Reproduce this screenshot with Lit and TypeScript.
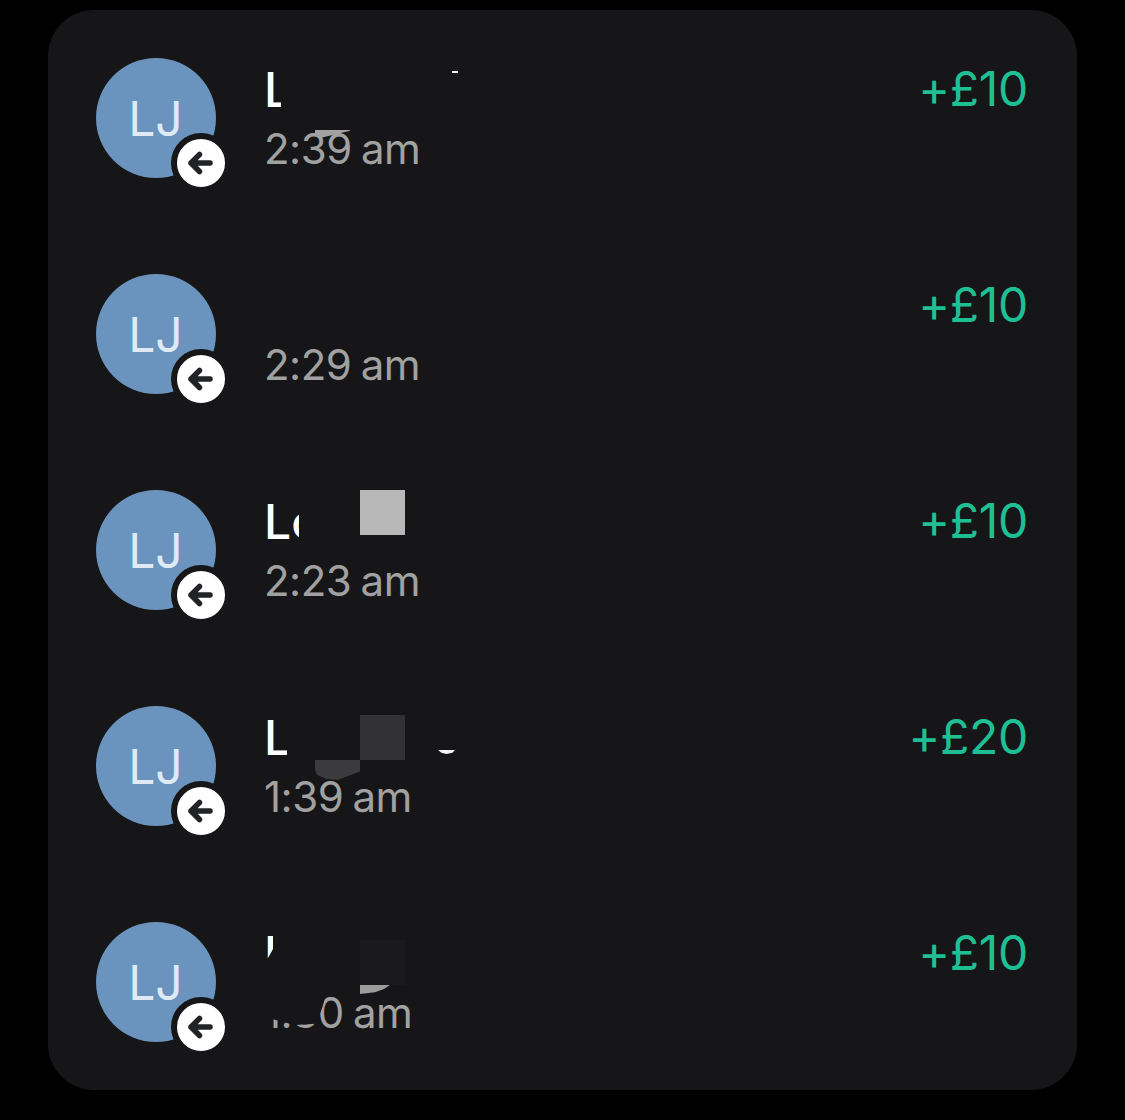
import { LitElement, html, css } from "lit";
import { customElement } from "lit/decorators.js";

const CARD = "#161618";

interface Patch { x: number; y: number; w: number; h: number; c: string; clip?: string }
interface Tx { name: string; time: string; amount: string; patches: Patch[] }

const rows: Tx[] = [
  {
    name: "L", time: "2:39 am", amount: "+£10",
    patches: [
      { x: 15, y: 10, w: 30, h: 44, c: CARD },
      { x: 186, y: 13, w: 6, h: 2, c: "#f2f2f2" },
      { x: 49, y: 72, w: 35, h: 8, c: "#a2a2a2", clip: "polygon(0 0,100% 0,100% 8%,15% 100%,0 75%)" },
    ],
  },
  { name: "", time: "2:29 am", amount: "+£10", patches: [] },
  {
    name: "Lo", time: "2:23 am", amount: "+£10",
    patches: [
      { x: 33, y: 8, w: 30, h: 44, c: CARD },
      { x: 94, y: 0, w: 45, h: 45, c: "#b8b8b8" },
    ],
  },
  {
    name: "L", time: "1:39 am", amount: "+£20",
    patches: [
      { x: 21, y: 8, w: 10, h: 44, c: CARD },
      { x: 94, y: 9, w: 45, h: 45, c: "#323234" },
      { x: 49, y: 54, w: 45, h: 20, c: "#3b3b3d", clip: "polygon(0 0,100% 0,100% 58%,50% 100%,25% 95%,5% 75%,0 50%)" },
      { x: 172, y: 44, w: 17, h: 4, c: "#f4f4f4", clip: "polygon(0 0,100% 0,85% 70%,50% 100%,20% 70%)" },
    ],
  },
  {
    name: "L", time: "1:30 am", amount: "+£10",
    patches: [
      { x: -4, y: 8, w: 40, h: 50, c: CARD, clip: "polygon(27.5% 0,100% 0,100% 100%,0 100%,0 56%,15% 56%,27.5% 38%)" },
      { x: 94, y: 18, w: 45, h: 45, c: "#1a1a1c" },
      { x: 94, y: 63, w: 30, h: 9, c: "#9c9c9c", clip: "polygon(0 0,100% 0,80% 45%,50% 80%,0 100%)" },
      { x: -4, y: 66, w: 66, h: 42, c: CARD, clip: "polygon(0 0,100% 0,91% 48%,82% 85%,50% 88%,18% 75%,12% 75%,11% 100%,0 100%)" },
    ],
  },
];

@customElement("app-root")
export class AppRoot extends LitElement {
  static styles = css`
    :host {
      display: block;
      width: 1125px;
      height: 1120px;
      background: #000;
      font-family: Inter, "Liberation Sans", sans-serif;
      overflow: hidden;
    }
    .page {
      padding: 10px 48px 30px;
    }
    .card {
      background: #161618;
      border-radius: 46px;
      height: 1080px;
      box-sizing: border-box;
      padding: 48px 49px 48px 48px;
      display: flex;
      flex-direction: column;
      gap: 96px;
    }
    .row {
      display: flex;
      gap: 50px;
      height: 120px;
    }
    .avatar {
      position: relative;
      flex: none;
      width: 120px;
      height: 120px;
      border-radius: 50%;
      background: #6a94bd;
      color: #dfeaf6;
      font-size: 48px;
      display: flex;
      align-items: center;
      justify-content: center;
      box-sizing: border-box;
      padding-right: 1px;
    }
    .badge {
      position: absolute;
      left: 75px;
      top: 75px;
      width: 48px;
      height: 48px;
      border-radius: 50%;
      background: #fff;
      border: 6px solid #161618;
      display: flex;
    }
    .text {
      position: relative;
      flex: 1;
      padding-top: 2px;
    }
    .name {
      color: #fff;
      font-size: 48px;
      font-weight: 500;
      line-height: 60px;
      height: 59px;
      margin-left: -2px;
    }
    .time {
      color: #a1a1a2;
      font-size: 42px;
      line-height: 60px;
      letter-spacing: -0.5px;
      word-spacing: -2px;
      margin-left: -2px;
    }
    .amount {
      color: #1fbf94;
      font-size: 48px;
      line-height: 60px;
      letter-spacing: -0.3px;
      padding-top: 1px;
    }
    .patch {
      position: absolute;
    }
  `;

  render() {
    return html`
      <div class="page">
        <div class="card">
          ${rows.map(
            (r) => html`
              <div class="row">
                <div class="avatar">
                  LJ
                  <div class="badge">
                    <svg width="48" height="48" viewBox="0 0 48 48" fill="none" stroke="#222326" stroke-width="5.5" stroke-linecap="round" stroke-linejoin="round">
                      <path d="M14 24H33M22.5 15.5L14 24L22.5 32.5" />
                    </svg>
                  </div>
                </div>
                <div class="text">
                  <div class="name">${r.name}</div>
                  <div class="time">${r.time}</div>
                  ${r.patches.map(
                    (p) => html`<div
                      class="patch"
                      style="left:${p.x}px;top:${p.y}px;width:${p.w}px;height:${p.h}px;background:${p.c};${p.clip ? `clip-path:${p.clip}` : ""}"
                    ></div>`
                  )}
                </div>
                <div class="amount">${r.amount}</div>
              </div>
            `
          )}
        </div>
      </div>
    `;
  }
}
